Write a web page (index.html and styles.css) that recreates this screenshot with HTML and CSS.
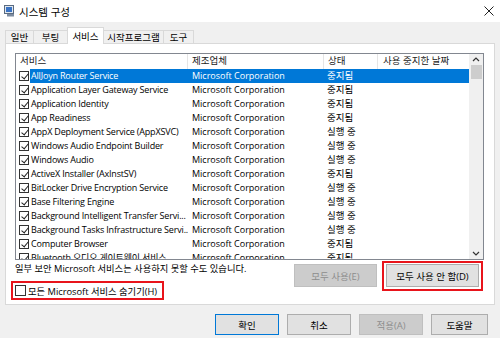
FILE: index.html
```html
<!DOCTYPE html>
<html lang="ko">
<head>
<meta charset="utf-8">
<title>시스템 구성</title>
<link rel="stylesheet" href="styles.css">
</head>
<body>
<div class="titlebar">
  <svg class="appicon" width="11" height="12" viewBox="0 0 11 12">
    <rect x="0.5" y="0.5" width="9" height="8" fill="#dfe6ee" stroke="#5a6b80"/>
    <rect x="2" y="2" width="6" height="5" fill="#3a73c4"/>
    <rect x="3" y="9" width="7" height="2.5" fill="#7d8ca0"/>
  </svg>
  <span class="title">시스템 구성</span>
  <svg class="close" width="10" height="10" viewBox="0 0 10 10">
    <path d="M0.5 0.5 L9.5 9.5 M9.5 0.5 L0.5 9.5" stroke="#222" stroke-width="1"/>
  </svg>
</div>

<div class="tabs">
  <div class="tab t1">일반</div>
  <div class="tab t2">부팅</div>
  <div class="tab t3 active">서비스</div>
  <div class="tab t4">시작프로그램</div>
  <div class="tab t5">도구</div>
</div>

<div class="panel">
  <div class="list">
    <div class="cols">
      <div class="head">
        <div class="hc">서비스</div>
        <div class="hc">제조업체</div>
        <div class="hc">상태</div>
        <div class="hc">사용 중지한 날짜</div>
      </div>
      <div class="row sel"><div class="c1"><span class="cb on"></span><span class="nm">AllJoyn Router Service</span></div><div class="c">Microsoft Corporation</div><div class="c ko">중지됨</div><div class="c"></div></div>
      <div class="row"><div class="c1"><span class="cb on"></span><span class="nm">Application Layer Gateway Service</span></div><div class="c">Microsoft Corporation</div><div class="c ko">중지됨</div><div class="c"></div></div>
      <div class="row"><div class="c1"><span class="cb on"></span><span class="nm">Application Identity</span></div><div class="c">Microsoft Corporation</div><div class="c ko">중지됨</div><div class="c"></div></div>
      <div class="row"><div class="c1"><span class="cb on"></span><span class="nm">App Readiness</span></div><div class="c">Microsoft Corporation</div><div class="c ko">중지됨</div><div class="c"></div></div>
      <div class="row"><div class="c1"><span class="cb on"></span><span class="nm">AppX Deployment Service (AppXSVC)</span></div><div class="c">Microsoft Corporation</div><div class="c ko">실행 중</div><div class="c"></div></div>
      <div class="row"><div class="c1"><span class="cb on"></span><span class="nm">Windows Audio Endpoint Builder</span></div><div class="c">Microsoft Corporation</div><div class="c ko">실행 중</div><div class="c"></div></div>
      <div class="row"><div class="c1"><span class="cb on"></span><span class="nm">Windows Audio</span></div><div class="c">Microsoft Corporation</div><div class="c ko">실행 중</div><div class="c"></div></div>
      <div class="row"><div class="c1"><span class="cb on"></span><span class="nm">ActiveX Installer (AxInstSV)</span></div><div class="c">Microsoft Corporation</div><div class="c ko">중지됨</div><div class="c"></div></div>
      <div class="row"><div class="c1"><span class="cb on"></span><span class="nm">BitLocker Drive Encryption Service</span></div><div class="c">Microsoft Corporation</div><div class="c ko">실행 중</div><div class="c"></div></div>
      <div class="row"><div class="c1"><span class="cb on"></span><span class="nm">Base Filtering Engine</span></div><div class="c">Microsoft Corporation</div><div class="c ko">실행 중</div><div class="c"></div></div>
      <div class="row"><div class="c1"><span class="cb on"></span><span class="nm">Background Intelligent Transfer Servi...</span></div><div class="c">Microsoft Corporation</div><div class="c ko">실행 중</div><div class="c"></div></div>
      <div class="row"><div class="c1"><span class="cb on"></span><span class="nm">Background Tasks Infrastructure Servi...</span></div><div class="c">Microsoft Corporation</div><div class="c ko">실행 중</div><div class="c"></div></div>
      <div class="row"><div class="c1"><span class="cb on"></span><span class="nm">Computer Browser</span></div><div class="c">Microsoft Corporation</div><div class="c ko">중지됨</div><div class="c"></div></div>
      <div class="row"><div class="c1"><span class="cb on"></span><span class="nm">Bluetooth 오디오 게이트웨이 서비스</span></div><div class="c">Microsoft Corporation</div><div class="c ko">중지됨</div><div class="c"></div></div>
    </div>
    <div class="scroll">
      <svg class="arr" width="14" height="11" viewBox="0 0 14 11"><path d="M4 7 L7 4 L10 7" fill="none" stroke="#333" stroke-width="1.2"/></svg>
      <div class="thumb"></div>
      <div class="track"></div>
      <svg class="arr" width="14" height="11" viewBox="0 0 14 11"><path d="M4 4 L7 7 L10 4" fill="none" stroke="#333" stroke-width="1.2"/></svg>
    </div>
  </div>

  <div class="under">
    <div class="left">
      <div class="note">일부 보안 Microsoft 서비스는 사용하지 못할 수도 있습니다.</div>
      <label class="hide redbox"><span class="cb"></span><span>모든 Microsoft 서비스 숨기기(H)</span></label>
    </div>
    <div class="right">
      <div class="btn disabled enable-all">모두 사용(E)</div>
      <div class="redbox redbtn"><div class="btn disable-all">모두 사용 안 함(D)</div></div>
    </div>
  </div>
</div>

<div class="footer">
  <div class="btn fb default">확인</div>
  <div class="btn fb">취소</div>
  <div class="btn fb disabled">적용(A)</div>
  <div class="btn fb help">도움말</div>
</div>
</body>
</html>
```

FILE: styles.css
```css
* { box-sizing: border-box; }
html, body { margin: 0; padding: 0; }
body {
  width: 500px;
  height: 338px;
  overflow: hidden;
  background: #f0f0f0;
  font-family: "Open Sans", "Noto Sans CJK KR", sans-serif;
  font-size: 9px;
  color: #000;
}

.titlebar {
  height: 22px;
  background: #fff;
  display: flex;
  align-items: center;
  padding-left: 4px;
}
.title { margin-left: 4px; font-size: 10.5px; color: #000; }
.close { margin-left: auto; margin-right: 6px; }

.tabs {
  display: flex;
  align-items: flex-end;
  height: 21px;
  padding-left: 5px;
  position: relative;
  z-index: 2;
}
.tab {
  height: 13px;
  border: 1px solid #d9d9d9;
  border-bottom: none;
  background: #f0f0f0;
  display: flex;
  align-items: center;
  justify-content: center;
  font-size: 9.5px;
  color: #000;
  margin-right: -1px;
}
.tab.active {
  height: 17px;
  background: #fff;
  margin-bottom: -1px;
}
.t1 { width: 29px; }
.t2 { width: 35px; }
.t3 { width: 37px; }
.t4 { width: 61px; }
.t5 { width: 31px; }

.panel {
  margin: 0 5px;
  height: 262px;
  background: #fff;
  border: 1px solid #d9d9d9;
  padding: 9px 10px 0 9px;
}

.list {
  height: 207px;
  border: 1px solid #828790;
  display: flex;
  overflow: hidden;
}
.cols { flex: 1; overflow: hidden; }
.head {
  display: grid;
  grid-template-columns: 172px 136px 54px 1fr;
  height: 15px;
}
.hc {
  border-right: 1px solid #e5e5e5;
  padding-left: 4px;
  line-height: 14px;
  color: #222;
  white-space: nowrap;
  font-size: 9.5px;
}
.hc:last-child { border-right: none; padding-left: 5px; }

.row {
  display: grid;
  grid-template-columns: 172px 136px 54px 1fr;
  height: 14px;
  line-height: 14px;
  white-space: nowrap;
}
.row.sel {
  background: linear-gradient(to right, transparent 14px, #0078d7 14px);
  color: #fff;
}
.c1 { display: flex; align-items: center; overflow: hidden; }
.c { padding-left: 4px; overflow: hidden; }
.ko { font-size: 9.5px; padding-left: 3px; }
.nm { margin-left: 2px; letter-spacing: -0.18px; }

.cb {
  display: inline-block;
  width: 10px;
  height: 10px;
  border: 1px solid #333;
  background: #fff;
  margin-left: 3px;
  position: relative;
  flex: none;
}
.cb.on::after {
  content: "";
  position: absolute;
  left: 2.5px;
  top: 0px;
  width: 3px;
  height: 6px;
  border-right: 1px solid #222;
  border-bottom: 1px solid #222;
  transform: rotate(40deg);
}

.scroll {
  width: 14px;
  background: #f0f0f0;
  display: flex;
  flex-direction: column;
  align-items: center;
}
.arr { flex: none; }
.thumb {
  width: 11px;
  height: 14px;
  background: #cdcdcd;
  flex: none;
}
.track { flex: 1; }

.under {
  display: flex;
  justify-content: space-between;
}
.left { display: flex; flex-direction: column; align-items: flex-start; }
.note { margin-top: 2px; line-height: 14px; font-size: 9.3px; }
.redbox { border: 2px solid #e8141b; }
.hide {
  margin-top: 5px;
  margin-left: -4px;
  height: 19px;
  padding: 0 5px 0 2px;
  display: flex;
  align-items: center;
  gap: 2px;
  font-size: 9.3px;
}
.hide .cb { margin-left: 0; width: 11px; height: 11px; }

.right { display: flex; align-items: flex-start; margin-right: 1px; }
.btn {
  background: #e1e1e1;
  border: 1px solid #adadad;
  display: flex;
  align-items: center;
  justify-content: center;
  color: #000;
  white-space: nowrap;
  font-size: 9.5px;
}
.btn.disabled {
  background: #cccccc;
  border-color: #bfbfbf;
  color: #8d8d8d;
}
.enable-all { width: 83px; height: 23px; margin-top: 4px; }
.redbtn { margin-top: 1px; margin-left: 5px; padding: 1px 2px; height: 30px; }
.disable-all { width: 93px; height: 23px; }

.footer {
  display: flex;
  justify-content: flex-end;
  gap: 8px;
  padding: 9px 12px 0 0;
}
.fb { width: 64px; height: 21px; }
.fb.default { border: 1px solid #0078d7; }
.fb.help { width: 57px; }
```
